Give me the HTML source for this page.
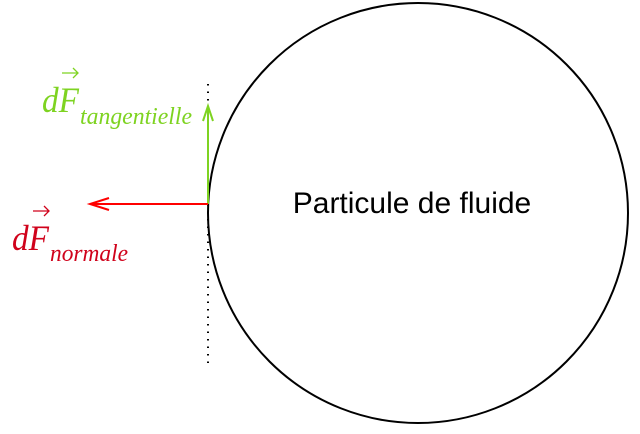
<!DOCTYPE html>
<html><head><style>
body{margin:0;width:640px;height:434px;background:#fff;overflow:hidden;position:relative}
</style></head><body>
<svg width="640" height="434" style="position:absolute;left:0;top:0">
<line x1="208" y1="84" x2="208" y2="364" stroke="#000" stroke-width="2" stroke-dasharray="1.5,6"/>
<circle cx="418" cy="213" r="210" fill="none" stroke="#000" stroke-width="2"/>
<line x1="208" y1="204" x2="208" y2="106" stroke="#7ed321" stroke-width="2"/>
<path d="M203,121 L208,106 L213,121" fill="none" stroke="#7ed321" stroke-width="2"/>
<line x1="208" y1="204" x2="90" y2="204" stroke="#f00" stroke-width="2"/>
<path d="M109,198 L90,204 L109,210" fill="none" stroke="#f00" stroke-width="2"/>
<text x="412" y="213" font-family="Liberation Sans" font-size="30" text-anchor="middle" fill="#000">Particule de fluide</text>
<text x="42" y="112" font-family="Liberation Serif" font-style="italic" font-size="36" fill="#7ed321" textLength="37" lengthAdjust="spacingAndGlyphs">dF</text>
<text x="80" y="124" font-family="Liberation Serif" font-style="italic" font-size="24" fill="#7ed321" textLength="112" lengthAdjust="spacingAndGlyphs">tangentielle</text>
<path d="M62,73 L78,73 M73,68 L78,73 L73,78" fill="none" stroke="#7ed321" stroke-width="1.3"/>
<text x="12" y="250" font-family="Liberation Serif" font-style="italic" font-size="36" fill="#d0021b" textLength="37" lengthAdjust="spacingAndGlyphs">dF</text>
<text x="50" y="261" font-family="Liberation Serif" font-style="italic" font-size="24" fill="#d0021b" textLength="78" lengthAdjust="spacingAndGlyphs">normale</text>
<path d="M33,211 L49,211 M44,206 L49,211 L44,216" fill="none" stroke="#d0021b" stroke-width="1.3"/>
</svg>
</body></html>
